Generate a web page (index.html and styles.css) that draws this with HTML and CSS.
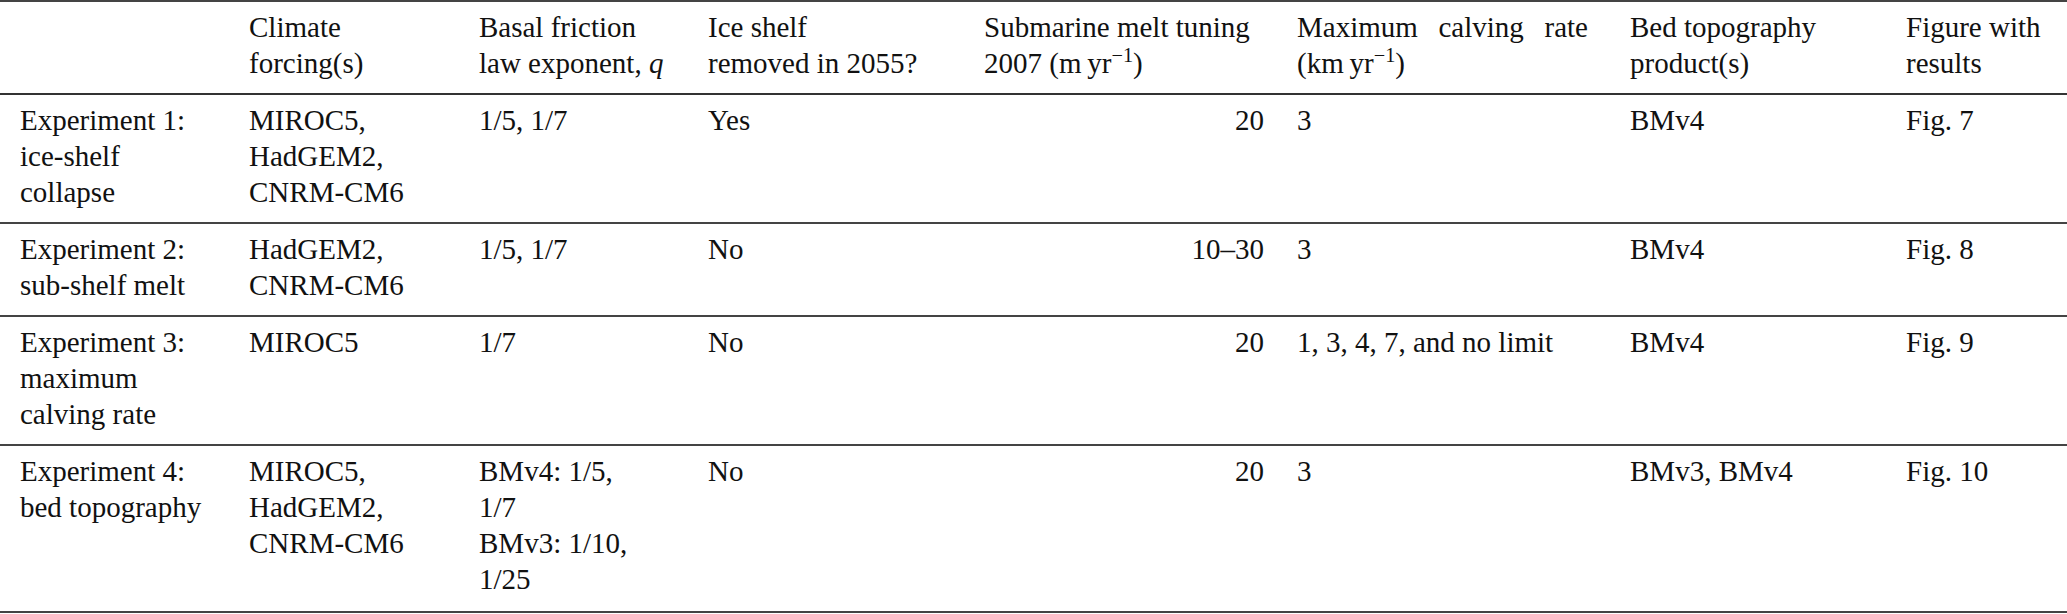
FILE: index.html
```html
<!DOCTYPE html>
<html lang="en">
<head>
<meta charset="utf-8">
<title>Experiments</title>
<link rel="stylesheet" href="styles.css">
</head>
<body>
<table class="exp-table">
  <colgroup>
    <col class="c1"><col class="c2"><col class="c3"><col class="c4"><col class="c5"><col class="c6"><col class="c7"><col class="c8">
  </colgroup>
  <thead>
    <tr>
      <th></th>
      <th>Climate<br>forcing(s)</th>
      <th>Basal friction<br>law exponent, <i>q</i></th>
      <th>Ice shelf<br>removed in 2055?</th>
      <th>Submarine melt tuning<br>2007 (m&#8201;yr<sup>&minus;1</sup>)</th>
      <th><span class="just">Maximum calving rate</span>(km&#8201;yr<sup>&minus;1</sup>)</th>
      <th>Bed topography<br>product(s)</th>
      <th>Figure with<br>results</th>
    </tr>
  </thead>
  <tbody>
    <tr>
      <td>Experiment 1:<br>ice-shelf<br>collapse</td>
      <td>MIROC5,<br>HadGEM2,<br>CNRM-CM6</td>
      <td>1/5, 1/7</td>
      <td>Yes</td>
      <td class="num">20</td>
      <td>3</td>
      <td>BMv4</td>
      <td>Fig. 7</td>
    </tr>
    <tr>
      <td>Experiment 2:<br>sub-shelf melt</td>
      <td>HadGEM2,<br>CNRM-CM6</td>
      <td>1/5, 1/7</td>
      <td>No</td>
      <td class="num">10&ndash;30</td>
      <td>3</td>
      <td>BMv4</td>
      <td>Fig. 8</td>
    </tr>
    <tr>
      <td>Experiment 3:<br>maximum<br>calving rate</td>
      <td>MIROC5</td>
      <td>1/7</td>
      <td>No</td>
      <td class="num">20</td>
      <td>1, 3, 4, 7, and no limit</td>
      <td>BMv4</td>
      <td>Fig. 9</td>
    </tr>
    <tr class="last">
      <td>Experiment 4:<br>bed topography</td>
      <td>MIROC5,<br>HadGEM2,<br>CNRM-CM6</td>
      <td>BMv4: 1/5,<br>1/7<br>BMv3: 1/10,<br>1/25</td>
      <td>No</td>
      <td class="num">20</td>
      <td>3</td>
      <td>BMv3, BMv4</td>
      <td>Fig. 10</td>
    </tr>
  </tbody>
</table>
</body>
</html>
```

FILE: styles.css
```css
html, body {
  margin: 0;
  padding: 0;
  background: #ffffff;
}

.exp-table {
  width: 2067px;
  border-collapse: collapse;
  table-layout: fixed;
  font-family: "Liberation Serif", "Times New Roman", serif;
  font-size: 29px;
  line-height: 36px;
  color: #111111;
}

.c1 { width: 249px; }
.c2 { width: 230px; }
.c3 { width: 229px; }
.c4 { width: 276px; }
.c5 { width: 313px; }
.c6 { width: 333px; }
.c7 { width: 276px; }
.c8 { width: 161px; }

.exp-table thead tr {
  border-top: 2px solid #444444;
  border-bottom: 2px solid #333333;
}

.exp-table tbody tr {
  border-bottom: 2px solid #444444;
}

.exp-table th,
.exp-table td {
  text-align: left;
  vertical-align: top;
  font-weight: normal;
  padding: 7px 0 12px 0;
}

.exp-table th:first-child,
.exp-table td:first-child {
  padding-left: 20px;
}

.exp-table td.num {
  text-align: right;
  padding-right: 33px;
}

.exp-table tr.last td {
  padding-bottom: 14px;
}

.just {
  display: block;
  width: 291px;
  text-align: justify;
  text-align-last: justify;
}

sup {
  font-size: 70%;
  line-height: 0;
  vertical-align: 0.55em;
}
```
